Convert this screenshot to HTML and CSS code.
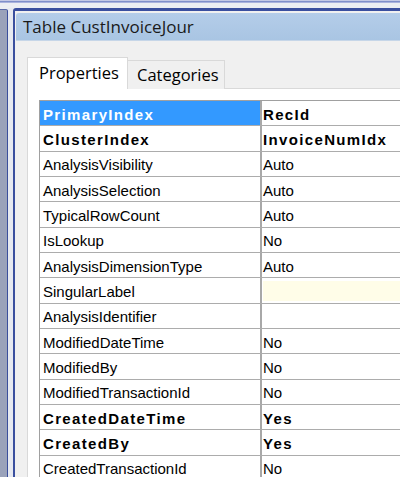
FILE: index.html
```html
<!DOCTYPE html>
<html>
<head>
<meta charset="utf-8">
<link rel="stylesheet" href="styles.css">
</head>
<body>
<div class="topbar"></div>
<div class="desk">
  <div class="leftwin"></div>
  <div class="gapcol"></div>
  <div class="win">
    <div class="title">Table CustInvoiceJour</div>
    <div class="body">
      <div class="tabs">
        <div class="tab active">Properties</div>
        <div class="tab">Categories</div>
      </div>
      <div class="panel">
        <div class="grid">
          <div class="row sel"><div class="k b">PrimaryIndex</div><div class="v b">RecId</div></div>
          <div class="row"><div class="k b">ClusterIndex</div><div class="v b">InvoiceNumIdx</div></div>
          <div class="row"><div class="k">AnalysisVisibility</div><div class="v">Auto</div></div>
          <div class="row"><div class="k">AnalysisSelection</div><div class="v">Auto</div></div>
          <div class="row"><div class="k">TypicalRowCount</div><div class="v">Auto</div></div>
          <div class="row"><div class="k">IsLookup</div><div class="v">No</div></div>
          <div class="row"><div class="k">AnalysisDimensionType</div><div class="v">Auto</div></div>
          <div class="row"><div class="k">SingularLabel</div><div class="v edit"></div></div>
          <div class="row"><div class="k">AnalysisIdentifier</div><div class="v"></div></div>
          <div class="row"><div class="k">ModifiedDateTime</div><div class="v">No</div></div>
          <div class="row"><div class="k">ModifiedBy</div><div class="v">No</div></div>
          <div class="row"><div class="k">ModifiedTransactionId</div><div class="v">No</div></div>
          <div class="row"><div class="k b">CreatedDateTime</div><div class="v b">Yes</div></div>
          <div class="row"><div class="k b">CreatedBy</div><div class="v b">Yes</div></div>
          <div class="row"><div class="k">CreatedTransactionId</div><div class="v">No</div></div>
        </div>
      </div>
    </div>
  </div>
</div>
</body>
</html>
```
FILE: styles.css
```css
html, body {
  margin: 0;
  padding: 0;
  width: 400px;
  height: 477px;
  overflow: hidden;
  background: #eceef3;
}
.topbar {
  height: 3px;
  background: linear-gradient(#c3c8e6 0 1px, #7f8fca 1px 2px, #aab3de 2px 3px);
  margin-bottom: 5px;
}
.desk {
  display: flex;
  height: 469px;
}
.leftwin {
  width: 7px;
  margin-top: 1px;
  background: #9aa2ba;
  border-right: 1px solid #3b4f9c;
  border-top: 1px solid #5a6aa8;
  border-top-right-radius: 2px;
}
.gapcol {
  width: 5px;
  background: #e6e9f1;
}
.win {
  flex: 1;
  display: flex;
  flex-direction: column;
  border-left: 2px solid #3a4f9f;
  border-top: 3px solid #3a4f9f;
  border-top-left-radius: 3px;
  background: #f0f0f0;
  padding-top: 2px;
  min-width: 0;
}
.title {
  height: 27px;
  margin-left: 1px;
  padding-left: 7px;
  background: linear-gradient(#b4cde9, #a9c5e3);
  border-bottom: 1px solid #c6d6e8;
  border-top-left-radius: 3px;
  font-family: "Open Sans", sans-serif;
  font-size: 17px;
  line-height: 27px;
  color: #1a1a1a;
  white-space: nowrap;
}
.body {
  flex: 1;
  display: flex;
  flex-direction: column;
  padding: 16px 0 0 12px;
  min-height: 0;
}
.tabs {
  display: flex;
  align-items: flex-end;
  height: 32px;
  position: relative;
  z-index: 1;
  margin-bottom: -1px;
}
.tab {
  font-family: "Open Sans", sans-serif;
  font-size: 16.5px;
  color: #000;
  white-space: nowrap;
}
.tab.active {
  width: 101px;
  height: 32px;
  box-sizing: border-box;
  background: #fff;
  border: 1px solid #d9d9d9;
  border-bottom: none;
  padding: 2px 0 0 11px;
  line-height: 26px;
}
.tab:not(.active) {
  width: 97px;
  height: 29px;
  box-sizing: border-box;
  background: #f0f0f0;
  border: 1px solid #d9d9d9;
  border-left: none;
  border-bottom: none;
  padding-left: 9px;
  line-height: 28px;
}
.panel {
  flex: 1;
  background: #fff;
  border-left: 1px solid #d9d9d9;
  border-top: 1px solid #d9d9d9;
  padding: 11px 0 0 11px;
  min-height: 0;
  overflow: hidden;
}
.grid {
  border-left: 1px solid #a0a0a0;
  border-top: 1px solid #a0a0a0;
  font-family: "Liberation Sans", Arial, sans-serif;
  font-size: 15px;
  color: #000;
}
.row {
  display: flex;
  height: 25.35px;
  box-sizing: border-box;
  border-bottom: 1px solid #acacac;
}
.k {
  width: 222px;
  flex: none;
  box-sizing: border-box;
  padding: 1.5px 0 0 3px;
  border-right: 2px solid #a8a8a8;
  line-height: 24px;
  white-space: nowrap;
  overflow: hidden;
}
.v {
  flex: 1;
  box-sizing: border-box;
  padding: 1.5px 0 0 1px;
  line-height: 24px;
  white-space: nowrap;
}
.b {
  font-weight: bold;
  letter-spacing: 1.35px;
}
.sel .k {
  background: #3399ff;
  color: #fff;
}
.v.edit {
  background: #fffde8;
  margin: 3px 0 2px 1px;
  padding: 0;
}
```
